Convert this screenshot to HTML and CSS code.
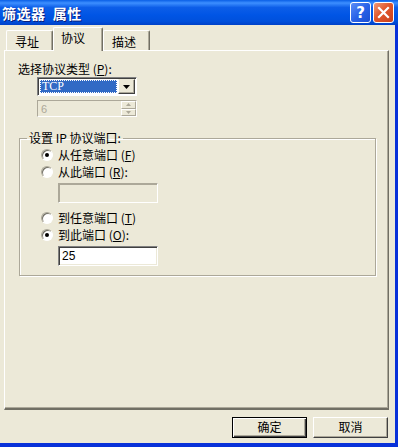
FILE: index.html
```html
<!DOCTYPE html>
<html lang="zh-CN">
<head>
  <meta charset="UTF-8">
  <title>筛选器 属性</title>
  <link rel="stylesheet" href="styles.css">
</head>
<body>
  <div class="window">
    <div class="titlebar">
      <span class="title">筛选器&nbsp; 属性</span>
      <div class="caption-btns">
        <div class="cap-btn help">?</div>
        <div class="cap-btn close">
          <svg width="13" height="13" viewBox="0 0 13 13"><path d="M2 2 L11 11 M11 2 L2 11" stroke="#fff" stroke-width="2.2" stroke-linecap="square"/></svg>
        </div>
      </div>
    </div>

    <div class="client">
      <div class="tabs">
        <div class="tab">寻址</div>
        <div class="tab active">协议</div>
        <div class="tab">描述</div>
      </div>

      <div class="panel">
        <div class="label">选择协议类型 (<u>P</u>):</div>
        <div class="combo">
          <div class="combo-value"><span>TCP</span></div>
          <div class="combo-btn">
            <svg width="7" height="4" viewBox="0 0 7 4"><path d="M0 0 H7 L3.5 4 Z" fill="#000"/></svg>
          </div>
        </div>
        <div class="spin">
          <span class="spin-value">6</span>
          <div class="spin-btns">
            <div class="spin-up"><svg width="5" height="3" viewBox="0 0 5 3"><path d="M0 3 H5 L2.5 0 Z" fill="#aca899"/></svg></div>
            <div class="spin-down"><svg width="5" height="3" viewBox="0 0 5 3"><path d="M0 0 H5 L2.5 3 Z" fill="#aca899"/></svg></div>
          </div>
        </div>

        <fieldset class="group">
          <legend>设置 IP 协议端口:</legend>
          <div class="radio-row checked"><span class="radio"></span><span>从任意端口 (<u>F</u>)</span></div>
          <div class="radio-row"><span class="radio"></span><span>从此端口 (<u>R</u>):</span></div>
          <div class="textbox disabled"></div>
          <div class="radio-row gap"><span class="radio"></span><span>到任意端口 (<u>T</u>)</span></div>
          <div class="radio-row checked"><span class="radio"></span><span>到此端口 (<u>O</u>):</span></div>
          <div class="textbox">25</div>
        </fieldset>
      </div>

      <div class="buttons">
        <div class="btn default">确定</div>
        <div class="btn">取消</div>
      </div>
    </div>
  </div>
</body>
</html>
```

FILE: styles.css
```css
body {
  margin: 0;
  background: #ece9d8;
  font-family: "Noto Sans CJK SC", "DejaVu Sans", sans-serif;
  font-size: 12px;
  color: #000;
}

.window {
  width: 395px;
  height: 443px;
  border-right: 3px solid #0831d9;
  border-bottom: 4px solid #0831d9;
  background: #ece9d8;
  display: flex;
  flex-direction: column;
}

.titlebar {
  height: 25px;
  flex: none;
  display: flex;
  align-items: center;
  justify-content: space-between;
  background: linear-gradient(180deg, #0a5fe6 0%, #3d8fff 12%, #0d5ee8 30%, #0055e5 60%, #0050dc 85%, #0041c8 100%);
  margin-right: -3px;
}

.title {
  color: #fff;
  font-weight: bold;
  font-size: 14px;
  padding-left: 2px;
  letter-spacing: 0.5px;
  text-shadow: 1px 1px 0 #0a1e7a;
}

.caption-btns {
  display: flex;
  gap: 2px;
  padding-right: 4px;
}

.cap-btn {
  width: 19px;
  height: 19px;
  border: 1px solid #fff;
  border-radius: 3px;
  display: flex;
  align-items: center;
  justify-content: center;
  color: #fff;
  font-family: "DejaVu Sans", sans-serif;
  font-weight: bold;
  font-size: 15px;
}

.help {
  background: linear-gradient(135deg, #5b8ef7 0%, #2a63e8 50%, #1c4fd3 100%);
}

.close {
  background: linear-gradient(135deg, #ef9a7a 0%, #e2572c 45%, #c8401c 100%);
}

.client {
  flex: 1;
  display: flex;
  flex-direction: column;
}

.tabs {
  display: flex;
  align-items: flex-end;
  padding: 2px 0 0 6px;
  height: 25px;
  box-sizing: border-box;
  position: relative;
  z-index: 1;
}

.tab {
  width: 47px;
  height: 20px;
  box-sizing: border-box;
  border: 1px solid;
  border-color: #fff #716f64 transparent #fff;
  border-bottom: none;
  border-radius: 2px 2px 0 0;
  box-shadow: inset -1px 0 0 #aca899;
  background: #ece9d8;
  padding: 2px 0 0 8px;
}

.tab.active {
  width: 50px;
  height: 24px;
  margin-bottom: -1px;
  padding-top: 1px;
  padding-left: 7px;
}

.panel {
  margin: 0 6px 0 4px;
  height: 360px;
  box-sizing: border-box;
  border: 1px solid #fff;
  border-right-color: #716f64;
  border-bottom: 2px solid #716f64;
  box-shadow: inset -1px -1px 0 #aca899;
  padding: 10px 0 0 13px;
}

.label {
  height: 15px;
  line-height: 15px;
}

.combo {
  margin: 1px 0 0 19px;
  width: 100px;
  height: 19px;
  box-sizing: border-box;
  border: 1px solid;
  border-color: #808080 #fff #fff #808080;
  box-shadow: inset 1px 1px 0 #404040;
  background: #fff;
  display: flex;
  padding: 2px 1px 1px 2px;
}

.combo-value {
  flex: 1;
  padding-right: 1px;
}

.combo-value span {
  display: block;
  height: 13px;
  line-height: 13px;
  background: #316ac5;
  color: #fff;
  outline: 1px dotted #fff;
  outline-offset: -1px;
  font-family: "Liberation Serif", "Noto Sans CJK SC", serif;
  padding-left: 2px;
}

.combo-btn {
  width: 17px;
  height: 15px;
  margin-top: -1px;
  box-sizing: border-box;
  background: #ece9d8;
  border: 1px solid;
  border-color: #ece9d8 #404040 #404040 #fff;
  box-shadow: inset -1px -1px 0 #aca899;
  display: flex;
  align-items: center;
  justify-content: center;
}

.spin {
  margin: 4px 0 0 19px;
  width: 100px;
  height: 17px;
  box-sizing: border-box;
  border: 1px solid;
  border-color: #aca899 #fff #fff #aca899;
  display: flex;
  align-items: center;
  justify-content: space-between;
  color: #aca899;
  padding-left: 3px;
}

.spin-value {
  font-family: "Liberation Sans", sans-serif;
  font-size: 11px;
}

.spin-btns {
  width: 15px;
  height: 15px;
  display: flex;
  flex-direction: column;
}

.spin-up, .spin-down {
  flex: 1;
  background: #ece9d8;
  border: 1px solid;
  border-color: #fff #aca899 #aca899 #fff;
  display: flex;
  align-items: center;
  justify-content: center;
}

.group {
  margin: 14px 0 0 1px;
  width: 357px;
  height: 145px;
  box-sizing: border-box;
  border: 1px solid #aca899;
  box-shadow: 1px 1px 0 #fff, inset 1px 1px 0 #fff;
  padding: 0 0 0 21px;
}

.group legend {
  padding: 0 2px;
  margin-left: -14px;
  line-height: 14px;
}

.radio-row {
  display: flex;
  align-items: center;
  height: 17px;
  gap: 5px;
}

.radio-row:first-of-type {
  margin-top: 1px;
}

.radio-row.gap {
  margin-top: 6px;
}

.radio {
  width: 12px;
  height: 12px;
  box-sizing: border-box;
  border-radius: 50%;
  background: #fff;
  border: 1px solid;
  border-color: #aca899 #fff #fff #aca899;
  box-shadow: inset 1px 1px 0 #716f64;
  display: flex;
  align-items: center;
  justify-content: center;
}

.checked .radio::after {
  content: "";
  width: 4px;
  height: 4px;
  border-radius: 50%;
  background: #000;
}

.textbox {
  margin: 3px 0 0 17px;
  width: 100px;
  height: 20px;
  box-sizing: border-box;
  border: 1px solid;
  border-color: #808080 #fff #fff #808080;
  box-shadow: inset 1px 1px 0 #404040, inset -1px -1px 0 #ece9d8;
  background: #fff;
  padding: 2px 0 0 3px;
  font-family: "Liberation Sans", sans-serif;
  font-size: 12px;
}

.textbox.disabled {
  background: #ece9d8;
  border-color: #aca899 #fff #fff #aca899;
  box-shadow: inset 1px 1px 0 #aca899;
}

.buttons {
  display: flex;
  justify-content: flex-end;
  gap: 6px;
  padding: 7px 7px 0 0;
}

.btn {
  width: 75px;
  height: 21px;
  box-sizing: border-box;
  border: 1px solid;
  border-color: #fff #404040 #404040 #fff;
  box-shadow: inset -1px -1px 0 #aca899;
  text-align: center;
  line-height: 18px;
}

.btn.default {
  border: 1px solid #000;
  box-shadow: inset 1px 1px 0 #fff, inset -1px -1px 0 #404040, inset -2px -2px 0 #aca899;
}
```
